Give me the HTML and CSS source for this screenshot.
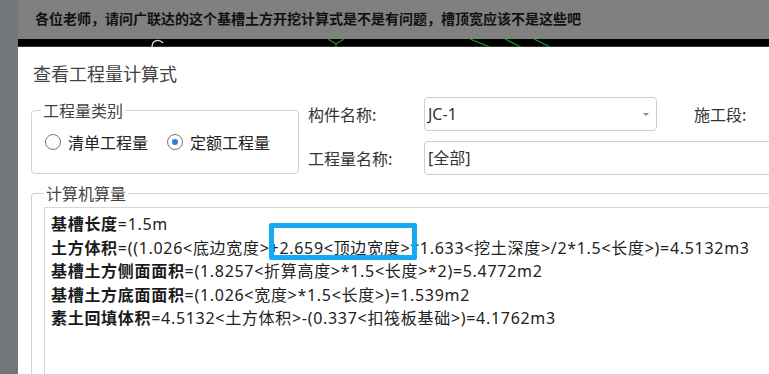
FILE: index.html
```html
<!DOCTYPE html>
<html lang="zh-CN">
<head>
    <meta charset="UTF-8">
    <meta name="viewport" content="width=device-width, initial-scale=1.0">
    <title>查看工程量计算式</title>
    <link rel="stylesheet" href="styles.css">
</head>
<body>
    <div class="page">
        <div class="side"></div>
        <div class="main">
            <div class="post">各位老师，请问广联达的这个基槽土方开挖计算式是不是有问题，槽顶宽应该不是这些吧</div>
            <div class="strip">
                <svg width="751" height="8" viewBox="0 0 751 8">
                    <path d="M134 8 C134 2 140 -1 145 4" fill="none" stroke="#e8e8e8" stroke-width="1.2"/>
                    <path d="M310 0 L318 5 L326 0 M318 5 L318 8" fill="none" stroke="#1f8f1f" stroke-width="1.3"/>
                    <path d="M452 0 L472 8 M487 0 L503 8 M516 0 L532 8" fill="none" stroke="#1f8f1f" stroke-width="1.3"/>
                </svg>
            </div>
            <div class="dialog">
                <h1 class="dialog-title">查看工程量计算式</h1>
                <div class="top-row">
                    <fieldset class="group type-group">
                        <legend>工程量类别</legend>
                        <div class="radios">
                            <label class="radio"><span class="circle"></span>清单工程量</label>
                            <label class="radio"><span class="circle checked"></span>定额工程量</label>
                        </div>
                    </fieldset>
                    <div class="fields">
                        <span class="field-label">构件名称:</span>
                        <div class="select">JC-1<span class="arrow"></span></div>
                        <span class="field-label stage">施工段:</span>
                        <span class="field-label">工程量名称:</span>
                        <div class="input">[全部]</div>
                    </div>
                </div>
                <fieldset class="group calc-group">
                    <legend>计算机算量</legend>
                    <div class="calc-box">
                        <div class="line"><b>基槽长度</b>=1.5m</div>
                        <div class="line"><b>土方体积</b>=((1.026&lt;底边宽度&gt;+2.659&lt;顶边宽度&gt;*1.633&lt;挖土深度&gt;/2*1.5&lt;长度&gt;)=4.5132m3</div>
                        <div class="line"><b>基槽土方侧面面积</b>=(1.8257&lt;折算高度&gt;*1.5&lt;长度&gt;*2)=5.4772m2</div>
                        <div class="line"><b>基槽土方底面面积</b>=(1.026&lt;宽度&gt;*1.5&lt;长度&gt;)=1.539m2</div>
                        <div class="line"><b>素土回填体积</b>=4.5132&lt;土方体积&gt;-(0.337&lt;扣筏板基础&gt;)=4.1762m3</div>
                        <div class="mark"></div>
                    </div>
                </fieldset>
            </div>
        </div>
    </div>
</body>
</html>
```

FILE: styles.css
```css
body {
    margin: 0;
    font-family: "Noto Sans", "Noto Sans CJK SC", sans-serif;
    color: #222;
    overflow: hidden;
}
.page {
    display: flex;
    width: 769px;
    height: 374px;
    overflow: hidden;
}
.side {
    width: 18px;
    flex-shrink: 0;
    background-color: #73767a;
}
.main {
    flex: 1;
    display: flex;
    flex-direction: column;
    min-width: 0;
}
.post {
    height: 39px;
    line-height: 37px;
    padding-left: 17px;
    background-color: #808080;
    color: #111;
    font-family: "Noto Sans CJK SC", sans-serif;
    font-size: 14px;
    font-weight: bold;
    white-space: nowrap;
}
.strip {
    height: 8px;
    background-color: #000;
    border-bottom: 1px solid #333;
    box-sizing: border-box;
}
.strip svg {
    display: block;
}
.dialog {
    flex: 1;
    background-color: #fff;
    border-top-left-radius: 8px;
    padding-left: 13px;
    font-size: 16px;
    overflow: hidden;
}
.dialog-title {
    margin: 14px 0 0 2px;
    font-family: "Noto Sans CJK SC", sans-serif;
    font-size: 18px;
    font-weight: normal;
    line-height: 24px;
    color: #444;
}
.top-row {
    display: flex;
    align-items: flex-start;
    margin-top: 12px;
}
.group {
    margin: 0;
    border: 1px solid #d2d2d2;
    border-radius: 4px;
    padding: 0 0 0 9px;
}
.group legend {
    padding: 0 2px;
    font-family: "Noto Sans CJK SC", sans-serif;
    line-height: 18px;
    color: #444;
}
.type-group {
    flex-shrink: 0;
    width: 268px;
    box-sizing: border-box;
    margin-top: 4px;
    height: 73px;
}
.radios {
    display: flex;
    align-items: center;
    padding: 13px 0 0 4px;
}
.radio {
    display: flex;
    align-items: center;
    font-family: "Noto Sans CJK SC", sans-serif;
    line-height: 20px;
    color: #222;
}
.radio + .radio {
    margin-left: 19px;
}
.circle {
    width: 16px;
    height: 16px;
    box-sizing: border-box;
    border: 1px solid #777;
    border-radius: 50%;
    margin-right: 7px;
    position: relative;
}
.circle.checked::after {
    content: "";
    position: absolute;
    left: 4px;
    top: 4px;
    width: 6px;
    height: 6px;
    border-radius: 50%;
    background-color: #2b7de0;
}
.fields {
    flex-shrink: 0;
    display: grid;
    grid-template-columns: 116px 233px auto;
    row-gap: 10px;
    margin-left: 9px;
    align-items: center;
    font-family: "Noto Sans CJK SC", sans-serif;
}
.field-label {
    color: #333;
    white-space: nowrap;
}
.stage {
    padding-left: 37px;
}
.select, .input {
    height: 34px;
    box-sizing: border-box;
    border: 1px solid #cfcfcf;
    border-radius: 4px;
    padding-left: 3px;
    line-height: 32px;
    color: #333;
    font-family: "Noto Sans", "Noto Sans CJK SC", sans-serif;
}
.select {
    position: relative;
}
.arrow {
    position: absolute;
    right: 7px;
    top: 15px;
    border-left: 3px solid transparent;
    border-right: 3px solid transparent;
    border-top: 3px solid #888;
}
.input {
    grid-column: 2 / 4;
    width: 360px;
}
.calc-group {
    margin-top: 9px;
    padding-left: 12px;
    border-right: none;
    border-bottom: none;
    border-radius: 4px 0 0 0;
    height: 200px;
}
.calc-box {
    position: relative;
    margin-top: 5px;
    height: 200px;
    border: 1px solid #d6d6d6;
    border-right: none;
    padding: 5px 0 0 6px;
    font-size: 16px;
    letter-spacing: 0.7px;
}
.line {
    line-height: 23.5px;
    white-space: nowrap;
    color: #222;
}
.line b {
    color: #1a1a1a;
}
.mark {
    position: absolute;
    left: 224px;
    top: 15px;
    width: 148px;
    height: 37px;
    box-sizing: border-box;
    border: 5px solid #14a9f2;
    border-radius: 2px;
}
```
